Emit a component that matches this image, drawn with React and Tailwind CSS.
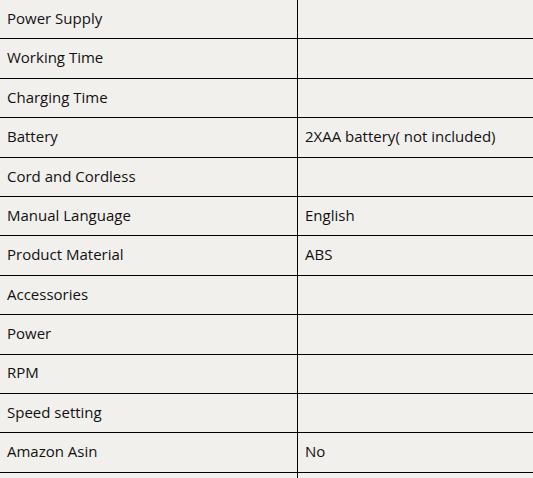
import React from 'react';

const ROWS = [
  ['Power Supply', ''],
  ['Working Time', ''],
  ['Charging Time', ''],
  ['Battery', '2XAA battery( not included)'],
  ['Cord and Cordless', ''],
  ['Manual Language', 'English'],
  ['Product Material', 'ABS'],
  ['Accessories', ''],
  ['Power', ''],
  ['RPM', ''],
  ['Speed setting', ''],
  ['Amazon Asin', 'No'],
  ['', ''],
];

export default function App() {
  return (
    <div className="w-[533px] h-[478px] overflow-hidden bg-[#f2f0ed] text-[#111] font-['Open_Sans',sans-serif] text-[15px]">
      <div className="flex flex-col">
        {ROWS.map(([label, value], i) => (
          <div key={i} className="flex h-[39.4px] shrink-0 border-b border-black">
            <div className="w-[298px] shrink-0 border-r border-black pl-[7px] pb-[2px] flex items-center">{label}</div>
            <div className="flex-1 pl-[7px] pb-[2px] flex items-center">{value}</div>
          </div>
        ))}
      </div>
    </div>
  );
}
